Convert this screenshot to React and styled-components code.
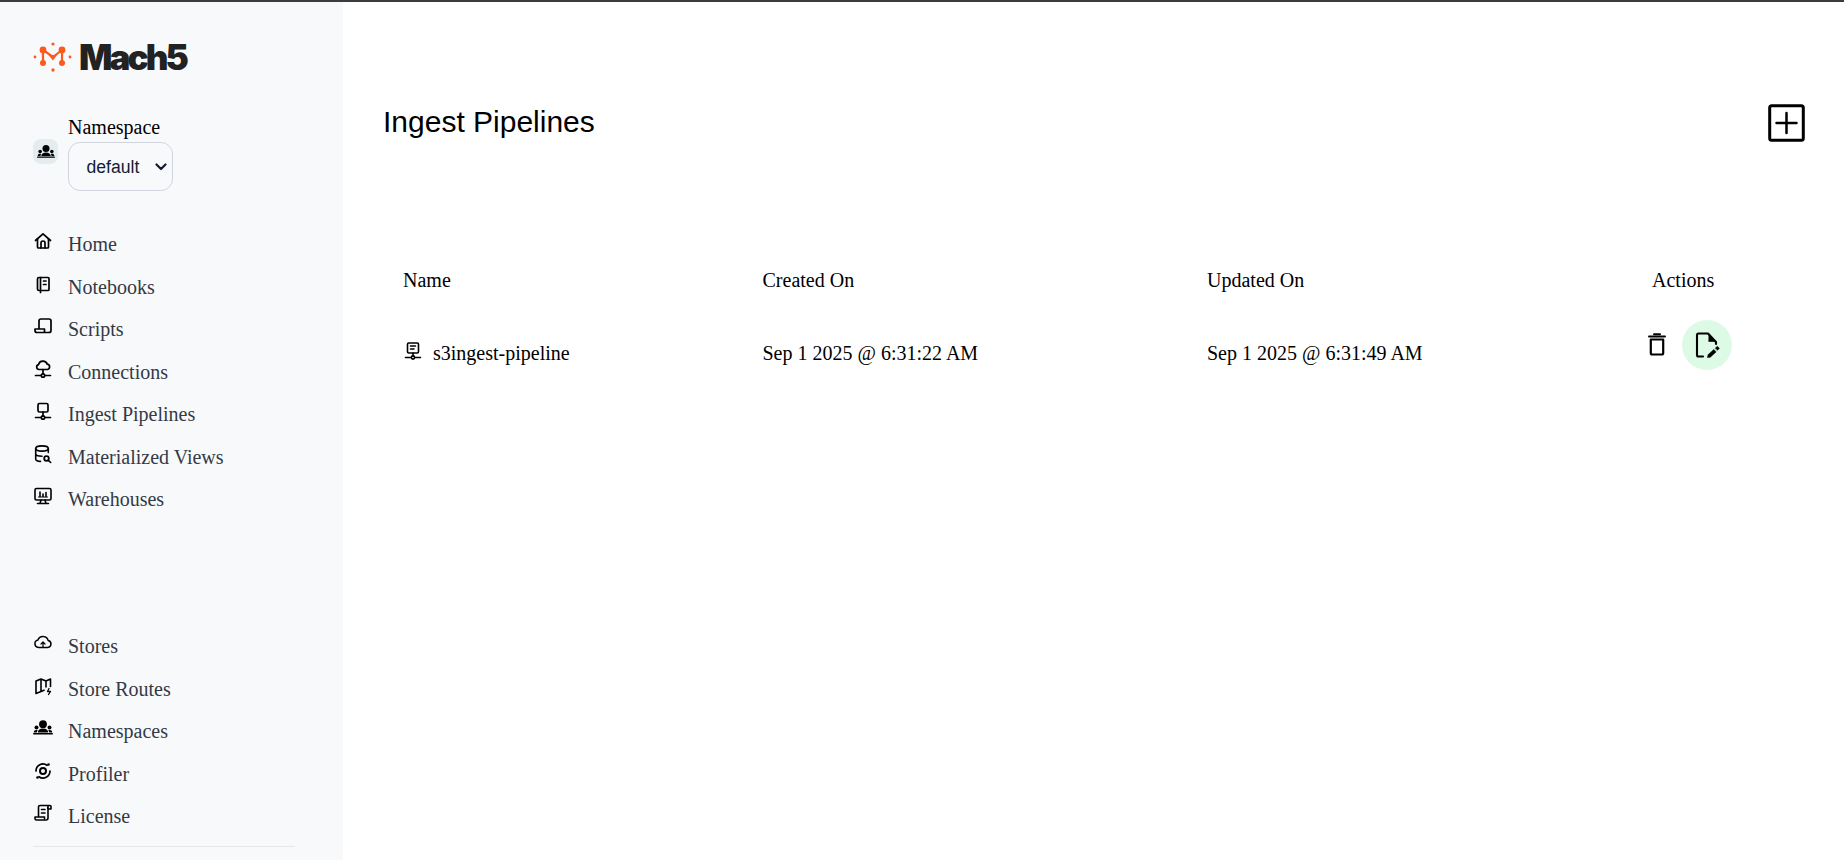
import React from "react";
import styled, { createGlobalStyle } from "styled-components";

const Global = createGlobalStyle`
  html, body { margin: 0; padding: 0; height: 100%; background: #fff; overflow: hidden; }
  * { box-sizing: border-box; }
  #root { height: 100%; }
`;

const Page = styled.div`
  height: 860px;
  display: flex;
  flex-direction: column;
  font-family: "Liberation Serif", serif;
  font-size: 20px;
  color: #000;
`;
const TopLine = styled.div`
  height: 2px;
  flex: none;
  background: #3c3c3c;
`;
const Body = styled.div`
  flex: 1;
  display: flex;
  min-height: 0;
`;
const Sidebar = styled.aside`
  width: 343px;
  flex: none;
  background: #f8f9fb;
  padding: 0 48px 0 33px;
  display: flex;
  flex-direction: column;
  overflow: hidden;
`;
const Brand = styled.div`
  display: flex;
  align-items: center;
  gap: 6px;
  height: 30px;
  margin-top: 40px;
`;
const BrandName = styled.span`
  font-family: Inter, "Liberation Sans", sans-serif;
  font-weight: 900;
  font-size: 35px;
  letter-spacing: -2.9px;
  line-height: 30px;
  color: #222;
`;
const NamespaceBlock = styled.div`
  display: flex;
  align-items: flex-start;
  gap: 10px;
  margin-top: 43.5px;
`;
const Badge = styled.div`
  width: 25px;
  height: 25px;
  flex: none;
  margin-top: 23.5px;
  border-radius: 8px;
  background: #e5ecef;
  display: flex;
  align-items: center;
  justify-content: center;
`;
const NamespaceField = styled.div`
  display: flex;
  flex-direction: column;
`;
const FieldLabel = styled.label`
  font-size: 20px;
  line-height: 23px;
  margin-bottom: 3.5px;
`;
const SelectBox = styled.div`
  width: 105px;
  height: 49px;
  border: 1px solid #d1d5de;
  border-radius: 12px;
  background: #f8f9fb;
  display: flex;
  align-items: center;
  padding: 1px 5px 0 17.5px;
  justify-content: space-between;
  font-family: "Liberation Sans", sans-serif;
  font-size: 17.6px;
  color: #141b34;
`;
const NavGroup = styled.nav`
  display: flex;
  flex-direction: column;
  margin-top: ${(p) => p.$top}px;
`;
const NavRow = styled.div`
  height: 42.48px;
  display: flex;
  align-items: flex-start;
  gap: 15px;
  color: #333a45;
  line-height: 42.48px;
  white-space: nowrap;
`;
const IconBox = styled.span`
  width: 20px;
  height: 20px;
  flex: none;
  margin-top: 8px;
  display: block;
  color: #000;
  & > svg { display: block; }
`;
const Divider = styled.div`
  height: 1px;
  background: #e4e7ec;
  margin-top: 8.5px;
`;
const Main = styled.main`
  flex: 1;
  min-width: 0;
  padding: 0 39px 0 40px;
`;
const HeaderRow = styled.div`
  display: flex;
  justify-content: space-between;
  align-items: flex-start;
  margin-top: 102px;
  height: 38px;
`;
const Title = styled.h1`
  margin: 0;
  font-family: "Liberation Sans", sans-serif;
  font-weight: 400;
  font-size: 30px;
  line-height: 36px;
`;
const AddButton = styled.button`
  all: unset;
  display: block;
  width: 37px;
  height: 38px;
  & > svg { display: block; }
`;
const TableGrid = styled.div`
  display: grid;
  grid-template-columns: 359.5px 444.5px 445px 1fr;
  margin-top: 114.5px;
`;
const HeadCell = styled.div`
  padding-left: 20px;
  height: 46px;
  line-height: 46px;
  font-weight: 400;
`;
const Cell = styled.div`
  padding-left: 20px;
  height: 100px;
  padding-top: 25px;
  line-height: 50px;
  display: flex;
  align-items: flex-start;
`;
const NameIcon = styled.span`
  display: block;
  width: 20px;
  height: 20px;
  margin: 13px 10px 0 0;
  flex: none;
  & > svg { display: block; }
`;
const ActionCell = styled.div`
  display: flex;
  align-items: center;
  height: 50px;
  margin-top: 17px;
  padding-left: 16px;
  gap: 16px;
`;
const IconButton = styled.button`
  all: unset;
  width: ${(p) => p.$size}px;
  height: ${(p) => p.$size}px;
  display: flex;
  align-items: center;
  justify-content: center;
  border-radius: 50%;
  background: ${(p) => p.$bg || "transparent"};
`;

const S = ({ children, w = 1.7, size = 20, box = 20 }) => (
  <svg width={size} height={size} viewBox={`0 0 ${box} ${box}`} fill="none" stroke="currentColor"
    strokeWidth={w} strokeLinecap="round" strokeLinejoin="round">{children}</svg>
);

const Logo = () => (
  <svg width="40" height="30" viewBox="0 0 40 30" fill="#fb5a1e" stroke="none">
    <path d="M10 8 L20 15 L29 8 M10 8 V21 M29 8 V21" fill="none" stroke="#fb5a1e" strokeWidth="2.2" />
    <circle cx="10" cy="8" r="3.4" /><circle cx="29" cy="8" r="3.4" />
    <circle cx="10" cy="21" r="3" /><circle cx="29" cy="21" r="3" />
    <path d="M15.5 13 L24 13 L20 18.5 Z" />
    <circle cx="20" cy="2" r="1.6" /><circle cx="2" cy="15" r="1.4" />
    <circle cx="37" cy="15" r="1.4" /><circle cx="20" cy="28" r="1.7" />
  </svg>
);
const Groups = ({ size = 20 }) => (
  <svg width={size} height={size} viewBox="0 0 20 20" fill="currentColor" stroke="none">
    <circle cx="10" cy="6.200" r="3.900" />
    <circle cx="3.500" cy="9.500" r="2" /><circle cx="16.500" cy="9.500" r="2" />
    <path d="M4.800 14.500c0-2.500 2.300-4 5.200-4s5.200 1.500 5.200 4Z" />
    <path d="M.8 14.500c0-1.800 1-2.500 2.500-2.500 .6 0 1 .1 1.400.3-.5.600-.9 1.300-.9 2.200ZM19.200 14.500c0-1.800-1-2.500-2.500-2.500-.6 0-1 .1-1.400.3.500.600.9 1.300.9 2.200Z" />
    <rect x="0" y="15" width="20" height="1.500" rx=".7" />
  </svg>
);
const Home = () => (
  <S><path d="M2.5 9.5 10 2.8l7.5 6.7" /><path d="M4.5 8v8a1 1 0 0 0 1 1h9a1 1 0 0 0 1-1V8" /><path d="M8 17v-5a2 2 0 0 1 4 0v5" /></S>
);
const Notebook = () => (
  <S><path d="M6 3.5h9a1 1 0 0 1 1 1v11a1 1 0 0 1-1 1H6a1.5 1.5 0 0 1-1.5-1.5V5A1.500 1.500 0 0 1 6 3.500Z" /><path d="M7.500 3.500v13M7.500 17.500v1" /><path d="M10.500 7h2.500M10.500 10.500h2.500" /></S>
);
const Script = () => (
  <S><path d="M6 13V5a2 2 0 0 1 2-2h8a2 2 0 0 1 2 2v9.500a2 2 0 0 1-2 2H4a2 2 0 0 1-2-2V13h9.500v3.500" /></S>
);
const Connection = () => (
  <S><path d="M6 10.500a2.500 2.500 0 0 1-.5-4.900 4.600 4.600 0 0 1 8.800-.400 2.700 2.700 0 0 1 .2 5.300Z" /><path d="M10 10.500v4M2.500 16.500h5.500M12 16.500h5.500" /><circle cx="10" cy="16.500" r="1.700" /></S>
);
const Ingest = () => (
  <S><rect x="5" y="2.500" width="10" height="8.500" rx="1.500" /><path d="M10 11v4M2.500 16.500h5.500M12 16.500h5.500" /><circle cx="10" cy="16.500" r="1.700" /></S>
);
const MatViews = () => (
  <S w={1.6}><ellipse cx="9" cy="4.500" rx="6.300" ry="2.600" /><path d="M2.700 4.500v10.500c0 1.400 2.500 2.300 4.800 2.400M15.300 4.500v4M2.700 9.800c0 1.400 2.800 2.500 6.300 2.500" /><circle cx="13.500" cy="14.500" r="2.300" strokeWidth="1.800" /><path d="M15.300 16.300 17.700 18.500" /></S>
);
const Warehouse = () => (
  <S w={1.6}><rect x="2" y="2.500" width="16" height="11.500" rx="1.500" /><path d="M7 17.500 8 14M13 17.500 12 14M4.500 17.500h11" /><path d="M7 6v4.500M10 8v2.500M13 6.500v4" /><path d="M5.500 11h9" strokeWidth="1" /></S>
);
const Store = () => (
  <S w={1.5}><path d="M5.500 14.500a3.800 3.800 0 0 1-.6-7.500 5.400 5.400 0 0 1 10.300.6 3.500 3.500 0 0 1-.4 6.900Z" /><path d="M10 14.500v-5M8 11l2-2 2 2" strokeWidth="1.200" /></S>
);
const MapBolt = () => (
  <S w={1.6}><path d="M8 15.500 3 17.500V5l5-2 5 2 4.500-2v7.500M8 3v12.500M8 15.500l3-1.300M13 5v6" /><path d="M16 12.500 14.500 15.500h3L15.500 18.500" strokeWidth="1.300" /></S>
);
const Profiler = () => (
  <S><circle cx="10" cy="10" r="3" strokeWidth="2" /><path d="M3 10a7 7 0 0 1 11-5.700M17 10a7 7 0 0 1-11 5.700" /><circle cx="15.500" cy="3.500" r="1.300" fill="currentColor" stroke="none" /><circle cx="4.500" cy="16.500" r="1.300" fill="currentColor" stroke="none" /></S>
);
const License = () => (
  <S w={1.6}><path d="M5.500 14V4a1.500 1.500 0 0 1 1.500-1.500h10a1 1 0 0 1 1 1V6h-3.200V4M15 2.500V15a2 2 0 0 1-2 2H3.500a1.500 1.500 0 0 1-1.500-1.500V14h9.500v1.500" /><path d="M8.500 6.500H12M8.500 10H12" /></S>
);
const PipelineDoc = () => (
  <S w={1.6}><rect x="4.500" y="2" width="11" height="10" rx="1.200" /><path d="M7.500 5h5M7.500 8h3.500" /><path d="M10 12v2.500M2.500 16.500h5.500M12 16.500h5.500" /><circle cx="10" cy="16.500" r="1.600" /></S>
);
const Plus = () => (
  <svg width="37" height="38" viewBox="0 0 37 38" fill="none" stroke="#000" strokeLinecap="round">
    <rect x="1.700" y="1.700" width="33.600" height="34.600" rx="2" strokeWidth="3" />
    <path d="M8.500 19h20M18.500 9v20" strokeWidth="2.500" />
  </svg>
);
const Trash = () => (
  <svg width="18" height="23" viewBox="0 0 18 23" fill="none" stroke="#000" strokeLinecap="round" strokeLinejoin="round">
    <path d="M1 3.500h16" strokeWidth="2" /><path d="M6 1.200h6" strokeWidth="2" />
    <path d="M2.800 6.500V20a1.500 1.500 0 0 0 1.500 1.500h9.400a1.500 1.500 0 0 0 1.500-1.500V6.500Z" strokeWidth="2.200" />
  </svg>
);
const EditDoc = () => (
  <svg width="25" height="26" viewBox="0 0 25 26" fill="none" stroke="#000" strokeLinecap="round" strokeLinejoin="round">
    <path d="M8 24.500H3.500A1.500 1.500 0 0 1 2 23V3A1.500 1.500 0 0 1 3.500 1.500h9.500L21 10v2" strokeWidth="2.100" />
    <path d="M14 2.500 20 9.500h-6Z" fill="#000" strokeWidth=".6" />
    <path d="M12.500 25.500l.5-2.800 5.800-5.300 2.300 2.500-5.800 5.300Z" fill="#000" strokeWidth=".5" />
    <path d="M20.400 16l2-1.800 2 2.200-2 1.800Z" fill="#000" strokeWidth=".5" />
  </svg>
);

const Item = ({ icon, children }) => (
  <NavRow><IconBox>{icon}</IconBox><span>{children}</span></NavRow>
);

const topItems = [
  ["Home", <Home />], ["Notebooks", <Notebook />], ["Scripts", <Script />],
  ["Connections", <Connection />], ["Ingest Pipelines", <Ingest />],
  ["Materialized Views", <MatViews />], ["Warehouses", <Warehouse />],
];
const bottomItems = [
  ["Stores", <Store />], ["Store Routes", <MapBolt />], ["Namespaces", <Groups />],
  ["Profiler", <Profiler />], ["License", <License />],
];

export default function App() {
  return (
    <Page>
      <Global />
      <TopLine />
      <Body>
        <Sidebar>
          <Brand><Logo /><BrandName>Mach5</BrandName></Brand>
          <NamespaceBlock>
            <Badge><Groups size={18} /></Badge>
            <NamespaceField>
              <FieldLabel>Namespace</FieldLabel>
              <SelectBox>
                <span>default</span>
                <svg width="12" height="8" viewBox="0 0 12 8" fill="none" stroke="#141b34" strokeWidth="2.200" strokeLinecap="round" strokeLinejoin="round"><path d="M1.500 1.500 6 6l4.500-4.500" /></svg>
              </SelectBox>
            </NamespaceField>
          </NamespaceBlock>
          <NavGroup $top={32.2}>
            {topItems.map(([t, i]) => <Item key={t} icon={i}>{t}</Item>)}
          </NavGroup>
          <NavGroup $top={105}>
            {bottomItems.map(([t, i]) => <Item key={t} icon={i}>{t}</Item>)}
          </NavGroup>
          <Divider />
        </Sidebar>
        <Main>
          <HeaderRow>
            <Title>Ingest Pipelines</Title>
            <AddButton aria-label="Add"><Plus /></AddButton>
          </HeaderRow>
          <TableGrid>
            <HeadCell>Name</HeadCell>
            <HeadCell>Created On</HeadCell>
            <HeadCell>Updated On</HeadCell>
            <HeadCell>Actions</HeadCell>
            <Cell><NameIcon><PipelineDoc /></NameIcon>s3ingest-pipeline</Cell>
            <Cell>Sep 1 2025 @ 6:31:22 AM</Cell>
            <Cell>Sep 1 2025 @ 6:31:49 AM</Cell>
            <ActionCell>
              <IconButton $size={18}><Trash /></IconButton>
              <IconButton $size={50} $bg="#dcfae6"><EditDoc /></IconButton>
            </ActionCell>
          </TableGrid>
        </Main>
      </Body>
    </Page>
  );
}
